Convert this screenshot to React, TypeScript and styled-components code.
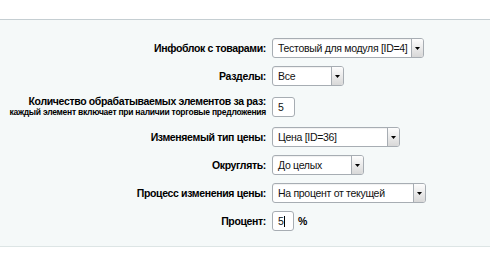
import React from 'react';
import styled, { createGlobalStyle } from 'styled-components';

const GlobalStyle = createGlobalStyle`
  html, body {
    margin: 0;
    padding: 0;
    background: #ffffff;
  }
  body {
    font-family: "Liberation Sans", Arial, sans-serif;
  }
`;

type Option = {
  label: string;
  sub?: string;
  kind: 'select' | 'input';
  value: string;
  width: number;
  suffix?: string;
  caret?: boolean;
};

const rows: Option[] = [
  { label: 'Инфоблок с товарами:', kind: 'select', value: 'Тестовый для модуля [ID=4]', width: 152 },
  { label: 'Разделы:', kind: 'select', value: 'Все', width: 72 },
  {
    label: 'Количество обрабатываемых элементов за раз:',
    sub: 'каждый элемент включает при наличии торговые предложения',
    kind: 'input',
    value: '5',
    width: 23,
  },
  { label: 'Изменяемый тип цены:', kind: 'select', value: 'Цена [ID=36]', width: 128 },
  { label: 'Округлять:', kind: 'select', value: 'До целых', width: 92 },
  { label: 'Процесс изменения цены:', kind: 'select', value: 'На процент от текущей', width: 154 },
  { label: 'Процент:', kind: 'input', value: '5', width: 22, suffix: '%', caret: true },
];

export default function App() {
  return (
    <>
      <GlobalStyle />
      <Page>
        <Panel>
          {rows.map((row) => (
            <Row key={row.label} tall={!!row.sub}>
              <Label>
                <div>{row.label}</div>
                {row.sub && <Sub>{row.sub}</Sub>}
              </Label>
              <Field>
                {row.kind === 'select' ? (
                  <Select style={{ width: row.width }}>
                    <SelectValue>{row.value}</SelectValue>
                    <Arrow>
                      <svg width="5" height="3" viewBox="0 0 5 3">
                        <path d="M0 0H5L2.5 3Z" fill="#000" />
                      </svg>
                    </Arrow>
                  </Select>
                ) : (
                  <Input style={{ width: row.width }}>
                    {row.value}
                    {row.caret && <Caret />}
                  </Input>
                )}
                {row.suffix && <Suffix>{row.suffix}</Suffix>}
              </Field>
            </Row>
          ))}
        </Panel>
      </Page>
    </>
  );
}

const Page = styled.div`
  padding-top: 19px;
  width: 490px;
  height: 264px;
  box-sizing: border-box;
`;

const Panel = styled.div`
  background: #f5f9f9;
  border-top: 1px solid #c5ced2;
  border-bottom: 1px solid #dde5e5;
  padding: 14px 0 11px;
`;

const Row = styled.div<{ tall: boolean }>`
  display: flex;
  align-items: center;
  height: ${(p) => (p.tall ? '33px' : '28px')};
`;

const Label = styled.div`
  width: 266px;
  text-align: right;
  font-weight: bold;
  font-size: 10.5px;
  letter-spacing: -0.35px;
  color: #000;
  line-height: 12px;
  white-space: nowrap;
`;

const Sub = styled.div`
  font-size: 8.5px;
  letter-spacing: -0.25px;
  line-height: 11px;
`;

const Field = styled.div`
  display: flex;
  align-items: center;
  margin-left: 6px;
`;

const Select = styled.div`
  height: 20px;
  box-sizing: border-box;
  border: 1px solid #a7adb3;
  border-radius: 3px;
  background: #fff;
  display: flex;
  align-items: stretch;
  box-shadow: inset 0 1px 1px rgba(0, 0, 0, 0.06);
`;

const SelectValue = styled.div`
  flex: 1;
  padding-left: 5px;
  font-size: 10.5px;
  letter-spacing: -0.3px;
  line-height: 18px;
  color: #111;
  white-space: nowrap;
  overflow: hidden;
`;

const Arrow = styled.div`
  width: 11px;
  border-left: 1px solid #a7adb3;
  background: linear-gradient(#fdfdfd, #d8d8d8);
  border-radius: 0 2px 2px 0;
  display: flex;
  align-items: center;
  justify-content: center;
`;

const Input = styled.div`
  height: 20px;
  box-sizing: border-box;
  border: 1px solid #a7adb3;
  border-radius: 3px;
  background: #fff;
  padding-left: 5px;
  font-size: 10.5px;
  line-height: 18px;
  color: #111;
  display: flex;
  align-items: center;
`;

const Caret = styled.span`
  display: inline-block;
  width: 1px;
  height: 11px;
  background: #000;
`;

const Suffix = styled.span`
  margin-left: 4px;
  font-size: 10.5px;
  font-weight: bold;
  color: #000;
`;
